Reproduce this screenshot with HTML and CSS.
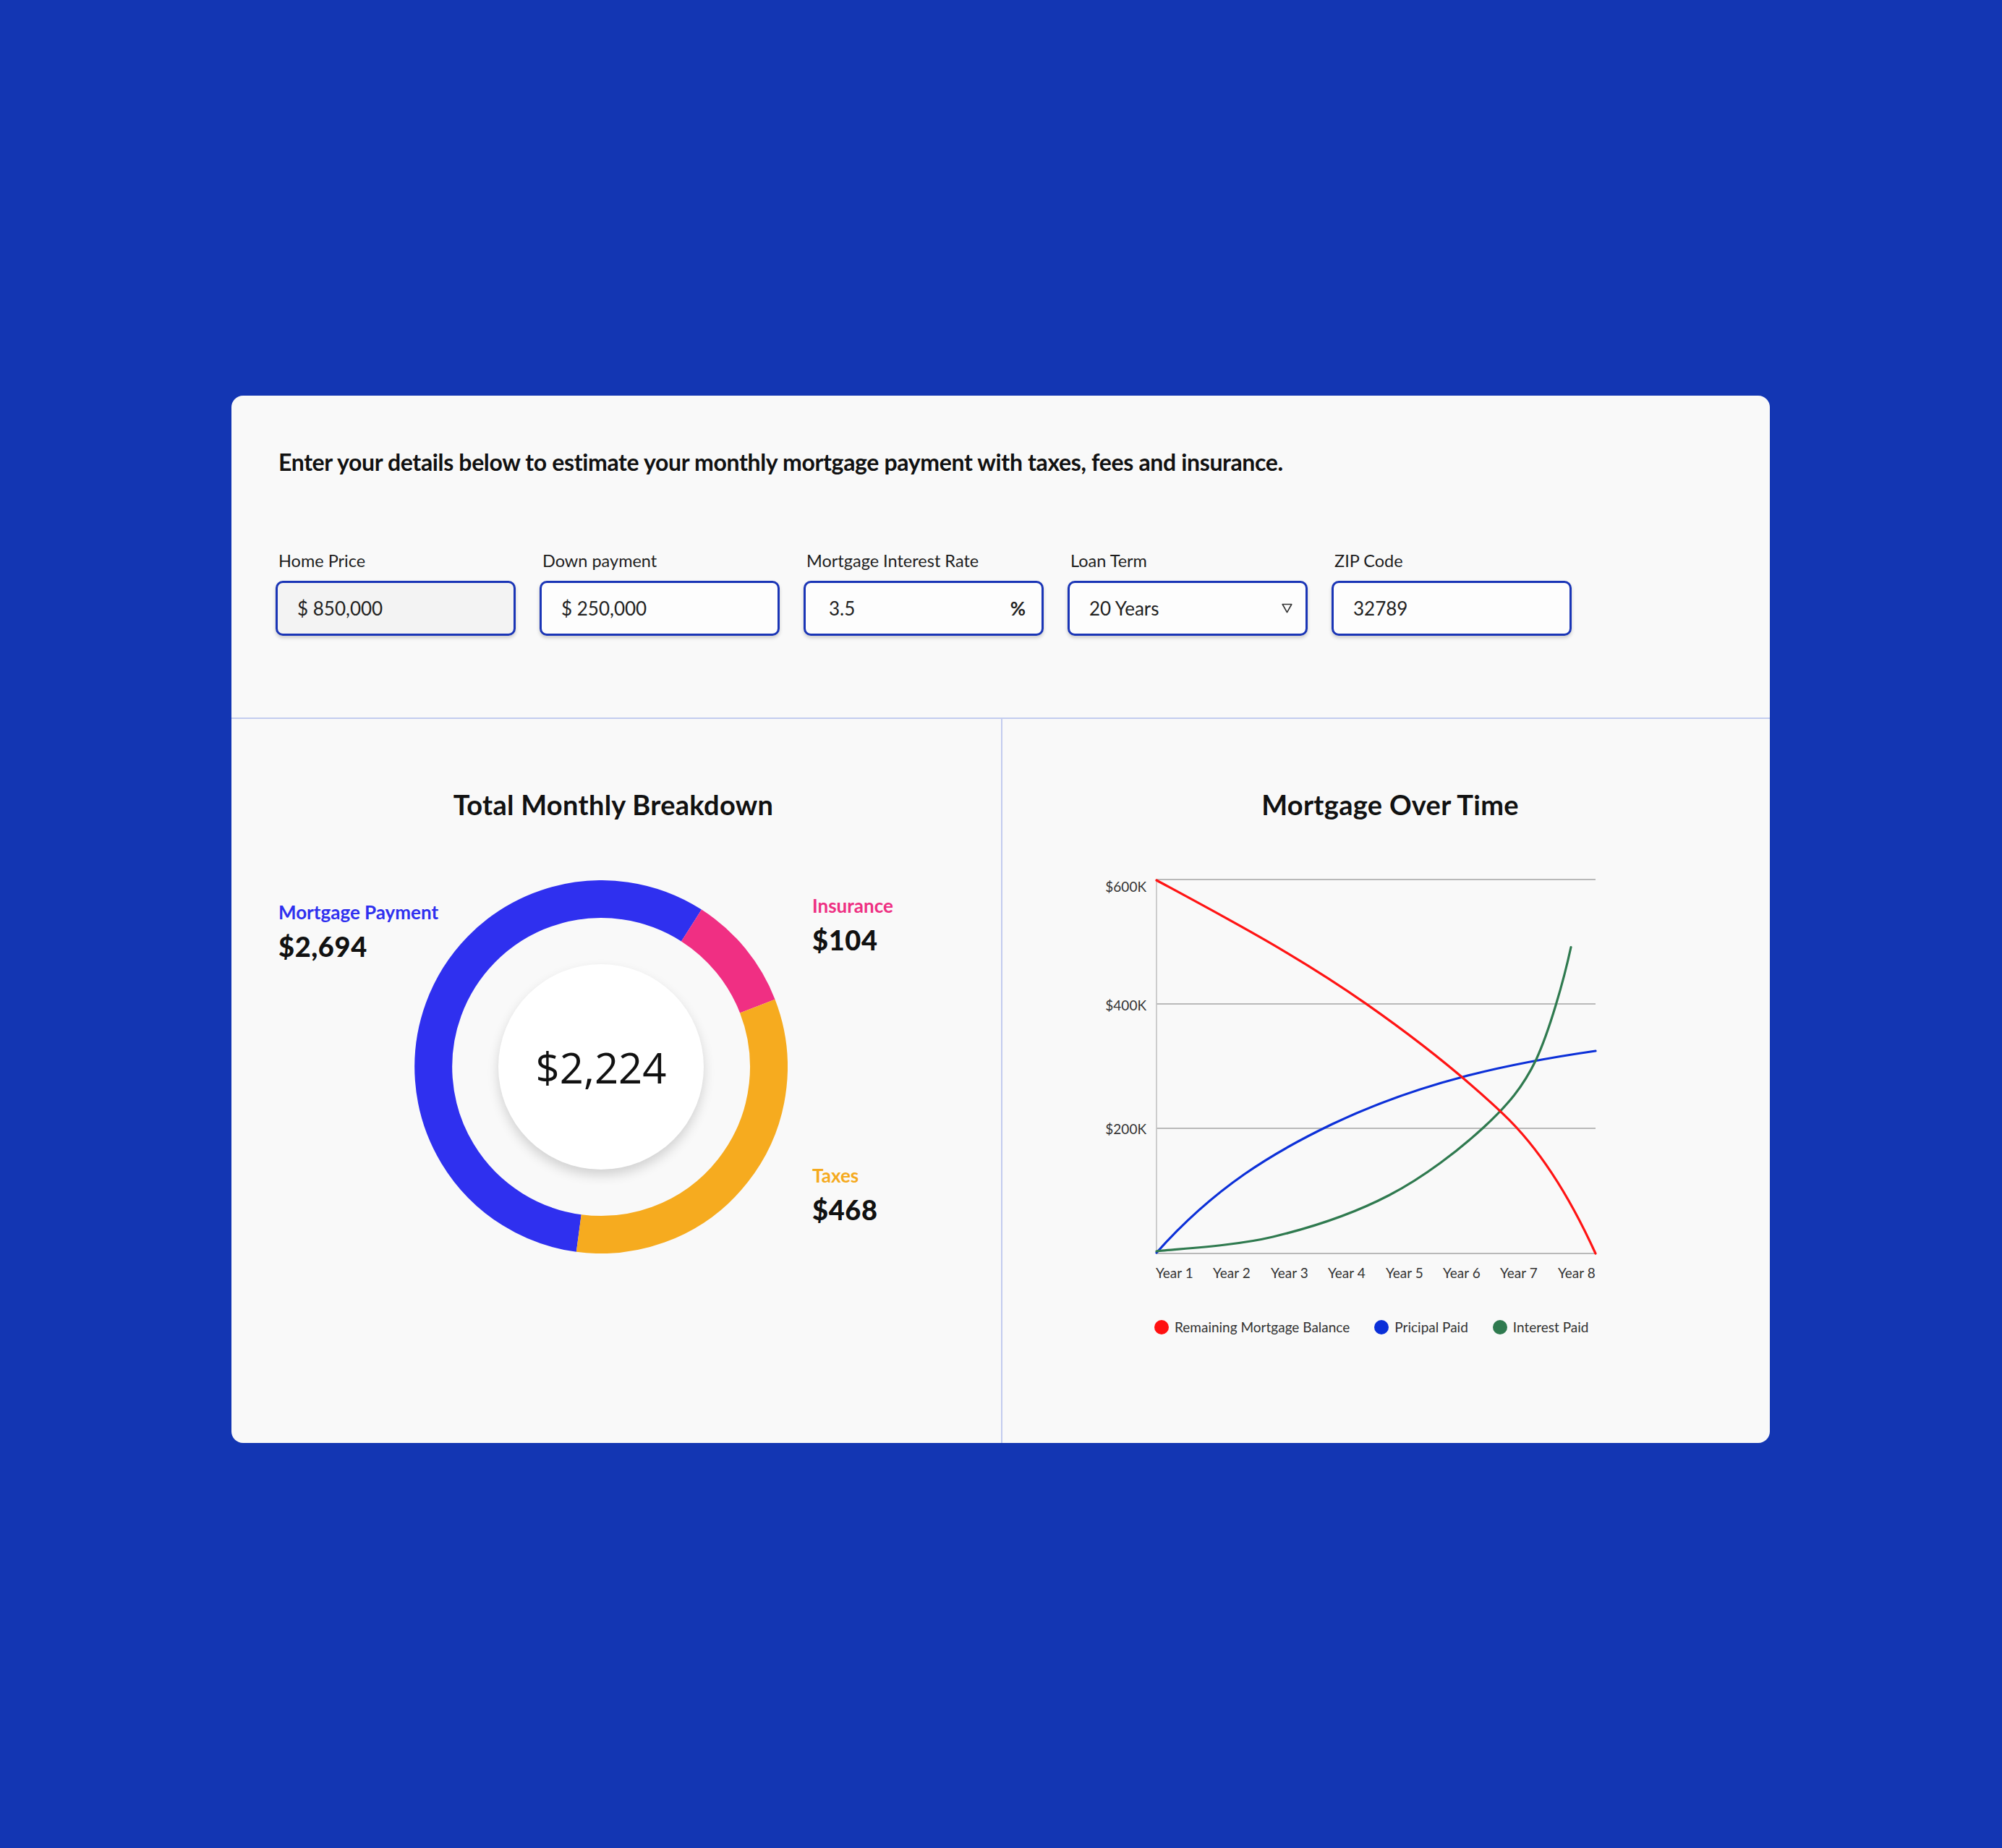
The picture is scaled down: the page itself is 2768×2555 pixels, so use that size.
FILE: index.html
```html
<!DOCTYPE html>
<html lang="en">
<head>
<meta charset="utf-8">
<title>Mortgage Calculator</title>
<link rel="stylesheet" href="styles.css">
</head>
<body>
<div class="page">
  <div class="card">
    <section class="inputs-section">
      <h1 class="intro">Enter your details below to estimate your monthly mortgage payment with taxes, fees and insurance.</h1>
      <div class="fields">
        <div class="field">
          <div class="label">Home Price</div>
          <div class="box box-muted"><span>$ 850,000</span></div>
        </div>
        <div class="field">
          <div class="label">Down payment</div>
          <div class="box"><span>$ 250,000</span></div>
        </div>
        <div class="field">
          <div class="label">Mortgage Interest Rate</div>
          <div class="box box-rate"><span>3.5</span><span class="unit">%</span></div>
        </div>
        <div class="field">
          <div class="label">Loan Term</div>
          <div class="box box-select"><span>20 Years</span>
            <svg class="caret" width="15" height="14" viewBox="0 0 15 14"><polygon points="1.2,1.5 13.8,1.5 7.5,12.6"/></svg>
          </div>
        </div>
        <div class="field">
          <div class="label">ZIP Code</div>
          <div class="box"><span>32789</span></div>
        </div>
      </div>
    </section>

    <section class="results">
      <div class="panel panel-left">
        <h2 class="panel-title title-left">Total Monthly Breakdown</h2>
        <div class="breakdown">
          <div class="side side-left">
            <div class="item-label c-blue">Mortgage Payment</div>
            <div class="item-value">$2,694</div>
          </div>
          <div class="donut">
            <svg class="ring" width="516" height="516" viewBox="0 0 516 516">
              <path class="seg seg-blue" d="M227.3,488.0 A232,232 0 1 1 383.0,62.5"/>
              <path class="seg seg-pink" d="M383.0,62.5 A232,232 0 0 1 474.3,174.1"/>
              <path class="seg seg-orange" d="M474.3,174.1 A232,232 0 0 1 227.3,488.0"/>
            </svg>
            <div class="donut-center">$2,224</div>
          </div>
          <div class="side side-right">
            <div class="item item-ins">
              <div class="item-label c-pink">Insurance</div>
              <div class="item-value">$104</div>
            </div>
            <div class="item item-tax">
              <div class="item-label c-orange">Taxes</div>
              <div class="item-value">$468</div>
            </div>
          </div>
        </div>
      </div>

      <div class="panel panel-right">
        <h2 class="panel-title title-right">Mortgage Over Time</h2>
        <svg class="chart" width="730" height="590" viewBox="0 0 730 590">
          <g class="grid">
            <line x1="99" y1="20" x2="706" y2="20"/>
            <line x1="99" y1="192" x2="706" y2="192"/>
            <line x1="99" y1="364" x2="706" y2="364"/>
            <line x1="99" y1="537" x2="706" y2="537"/>
            <line class="yaxis" x1="99" y1="20" x2="99" y2="537"/>
          </g>
          <g class="ylabels">
            <text x="85" y="37">$600K</text>
            <text x="85" y="201">$400K</text>
            <text x="85" y="372">$200K</text>
          </g>
          <g class="xlabels">
            <text x="98" y="571">Year 1</text>
            <text x="177" y="571">Year 2</text>
            <text x="257" y="571">Year 3</text>
            <text x="336" y="571">Year 4</text>
            <text x="416" y="571">Year 5</text>
            <text x="495" y="571">Year 6</text>
            <text x="574" y="571">Year 7</text>
            <text x="654" y="571">Year 8</text>
          </g>
          <path class="line line-blue" d="M99,536 C179.9,445 260.9,397 341.8,358.3 C463.2,300.4 584.6,274.5 706,257"/>
          <path class="line line-green" d="M99,534 C125.8,530.7 206.4,526.9 260,514 C313.6,501.1 372,481.75 420.6,456.5 C469.2,431.25 517.6,393.7 551.5,362.5 C585.4,331.3 606,306 623.8,269.2 C642,230 662,160 672,113.5"/>
          <path class="line line-red" d="M99,21 C195.87,73.3 292.73,124.6 389.6,192.4 C452.73,236.6 515.87,284.8 579,344.8 C621.33,385 663.67,443.9 706,537"/>
        </svg>
        <div class="legend">
          <div class="legend-item"><span class="dot dot-red"></span><span>Remaining Mortgage Balance</span></div>
          <div class="legend-item"><span class="dot dot-blue"></span><span>Pricipal Paid</span></div>
          <div class="legend-item"><span class="dot dot-green"></span><span>Interest Paid</span></div>
        </div>
      </div>
    </section>
  </div>
</div>
</body>
</html>
```

FILE: styles.css
```css
* { box-sizing: border-box; }

html, body {
  margin: 0;
  padding: 0;
}

body {
  background: #1336b3;
  font-family: "Lato", "Open Sans", sans-serif;
  color: #141414;
}

.page {
  width: 2768px;
  min-height: 2555px;
  padding: 547px 0 0 320px;
}

.card {
  width: 2127px;
  height: 1448px;
  background: #f9f9f9;
  border-radius: 16px;
  overflow: hidden;
}

/* ---------- inputs ---------- */
.inputs-section {
  height: 445px;
  padding: 72px 0 0 61px;
}

.intro {
  margin: 0 0 0 4px;
  font-size: 32px;
  line-height: 40px;
  font-weight: 700;
  letter-spacing: -0.35px;
  color: #111;
}

.fields {
  display: flex;
  gap: 33px;
  margin-top: 102px;
}

.field {
  width: 332px;
}

.label {
  margin: 0 0 14px 4px;
  font-size: 23.5px;
  line-height: 28px;
  font-weight: 400;
  color: #1e1e1e;
}

.box {
  height: 76px;
  border: 3px solid #1a35b6;
  border-radius: 10px;
  background: #fdfdfd;
  box-shadow: 0 3px 5px rgba(0, 0, 0, 0.18);
  padding: 0 22px 0 27px;
  display: flex;
  align-items: center;
  justify-content: space-between;
  font-size: 26px;
  color: #222;
}

.box-muted {
  background: #f3f3f3;
}

.box-rate {
  padding-left: 32px;
}

.unit {
  font-weight: 700;
  color: #222;
}

.box-select {
  padding-right: 18px;
}

.caret polygon {
  fill: none;
  stroke: #333;
  stroke-width: 1.6;
  stroke-linejoin: round;
}

/* ---------- results ---------- */
.results {
  display: grid;
  grid-template-columns: 1064px 1fr;
  height: 1003px;
  border-top: 2px solid #c3ccef;
}

.panel {
  padding-top: 95px;
}

.panel-right {
  border-left: 2px solid #c3ccef;
}

.panel-title {
  margin: 0;
  text-align: center;
  font-size: 38px;
  line-height: 46px;
  font-weight: 700;
  letter-spacing: 0.3px;
  color: #111;
}

.title-left {
  padding-right: 8px;
}

.title-right {
  padding-left: 11px;
}

.breakdown {
  display: grid;
  grid-template-columns: 188px 516px auto;
  margin: 82px 0 0 65px;
}

.side-left {
  padding-top: 29px;
  white-space: nowrap;
}

.side-right {
  padding-left: 34px;
  display: flex;
  flex-direction: column;
  white-space: nowrap;
}

.item-ins {
  padding-top: 20px;
}

.item-tax {
  margin-top: 289px;
}

.item-label {
  font-size: 26px;
  line-height: 30px;
  font-weight: 700;
}

.item-value {
  margin-top: 10px;
  font-size: 38px;
  line-height: 44px;
  font-weight: 900;
  letter-spacing: 0.6px;
  color: #111;
}

.c-blue { color: #2f30ef; }
.c-pink { color: #ee2f82; }
.c-orange { color: #f5aa1e; }

.donut {
  width: 516px;
  height: 516px;
  display: grid;
  place-items: center;
}

.donut > * {
  grid-area: 1 / 1;
}

.seg {
  fill: none;
  stroke-width: 52;
}

.seg-blue { stroke: #2f30ef; }
.seg-pink { stroke: #f02f83; }
.seg-orange { stroke: #f6ab1f; }

.donut-center {
  width: 284px;
  height: 284px;
  border-radius: 50%;
  background: #ffffff;
  box-shadow: 0 8px 16px rgba(0, 0, 0, 0.16);
  display: flex;
  align-items: center;
  justify-content: center;
  font-family: "Open Sans", "Noto Sans", sans-serif;
  font-size: 58px;
  font-weight: 400;
  color: #111;
}

/* ---------- chart ---------- */
.chart {
  display: block;
  margin: 61px 0 0 114px;
}

.grid line {
  stroke: #b9b9b9;
  stroke-width: 2;
}

.grid .yaxis {
  stroke: #c2c2c2;
  stroke-width: 1.6;
}

.ylabels text,
.xlabels text {
  font-family: "Lato", sans-serif;
  font-size: 19px;
  fill: #333;
}

.ylabels text {
  text-anchor: end;
}

.line {
  fill: none;
  stroke-width: 3.2;
  stroke-linecap: round;
}

.line-red { stroke: #ff1414; }
.line-blue { stroke: #0c30d8; }
.line-green { stroke: #2f7a4f; }

.legend {
  display: flex;
  align-items: center;
  gap: 34px;
  margin: 37px 0 0 210px;
  font-size: 19px;
  line-height: 24px;
  color: #333;
}

.legend-item {
  display: flex;
  align-items: center;
  gap: 8px;
}

.dot {
  width: 20px;
  height: 20px;
  border-radius: 50%;
}

.dot-red { background: #ff1010; }
.dot-blue { background: #0a2fd8; }
.dot-green { background: #2f7a4f; }
```
